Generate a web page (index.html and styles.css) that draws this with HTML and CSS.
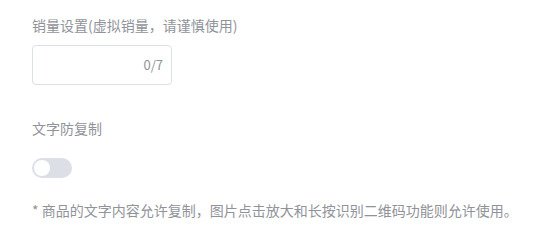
FILE: index.html
```html
<!DOCTYPE html>
<html lang="zh-CN">
<head>
<meta charset="utf-8">
<link rel="stylesheet" href="styles.css">
</head>
<body>
<div class="form">
  <div class="label">销量设置(虚拟销量，请谨慎使用)</div>
  <div class="input-box"><span class="count">0/7</span></div>
  <div class="label label-2">文字防复制</div>
  <div class="switch"><span class="knob"></span></div>
  <div class="note">* 商品的文字内容允许复制，图片点击放大和长按识别二维码功能则允许使用。</div>
</div>
</body>
</html>
```

FILE: styles.css
```css
html, body {
  margin: 0;
  padding: 0;
  background: #ffffff;
}
body {
  font-family: "Noto Sans CJK SC", "Noto Sans", sans-serif;
  font-size: 14px;
  color: #909399;
}
.form {
  padding: 15px 0 0 32px;
  display: flex;
  flex-direction: column;
  align-items: flex-start;
}
.label {
  line-height: 20px;
  height: 20px;
}
.input-box {
  margin-top: 10px;
  box-sizing: border-box;
  width: 140px;
  height: 40px;
  border: 1px solid #dcdfe6;
  border-radius: 4px;
  display: flex;
  align-items: center;
  justify-content: flex-end;
  padding-right: 8px;
}
.count {
  font-size: 13px;
  color: #909399;
  line-height: 20px;
}
.label-2 {
  margin-top: 33px;
}
.switch {
  margin-top: 20px;
  width: 40px;
  height: 20px;
  border-radius: 10px;
  background: #dcdfe6;
  display: flex;
  align-items: center;
  padding-left: 2px;
  box-sizing: border-box;
}
.knob {
  width: 16px;
  height: 16px;
  border-radius: 50%;
  background: #ffffff;
}
.note {
  margin-top: 22px;
  line-height: 20px;
}
```
